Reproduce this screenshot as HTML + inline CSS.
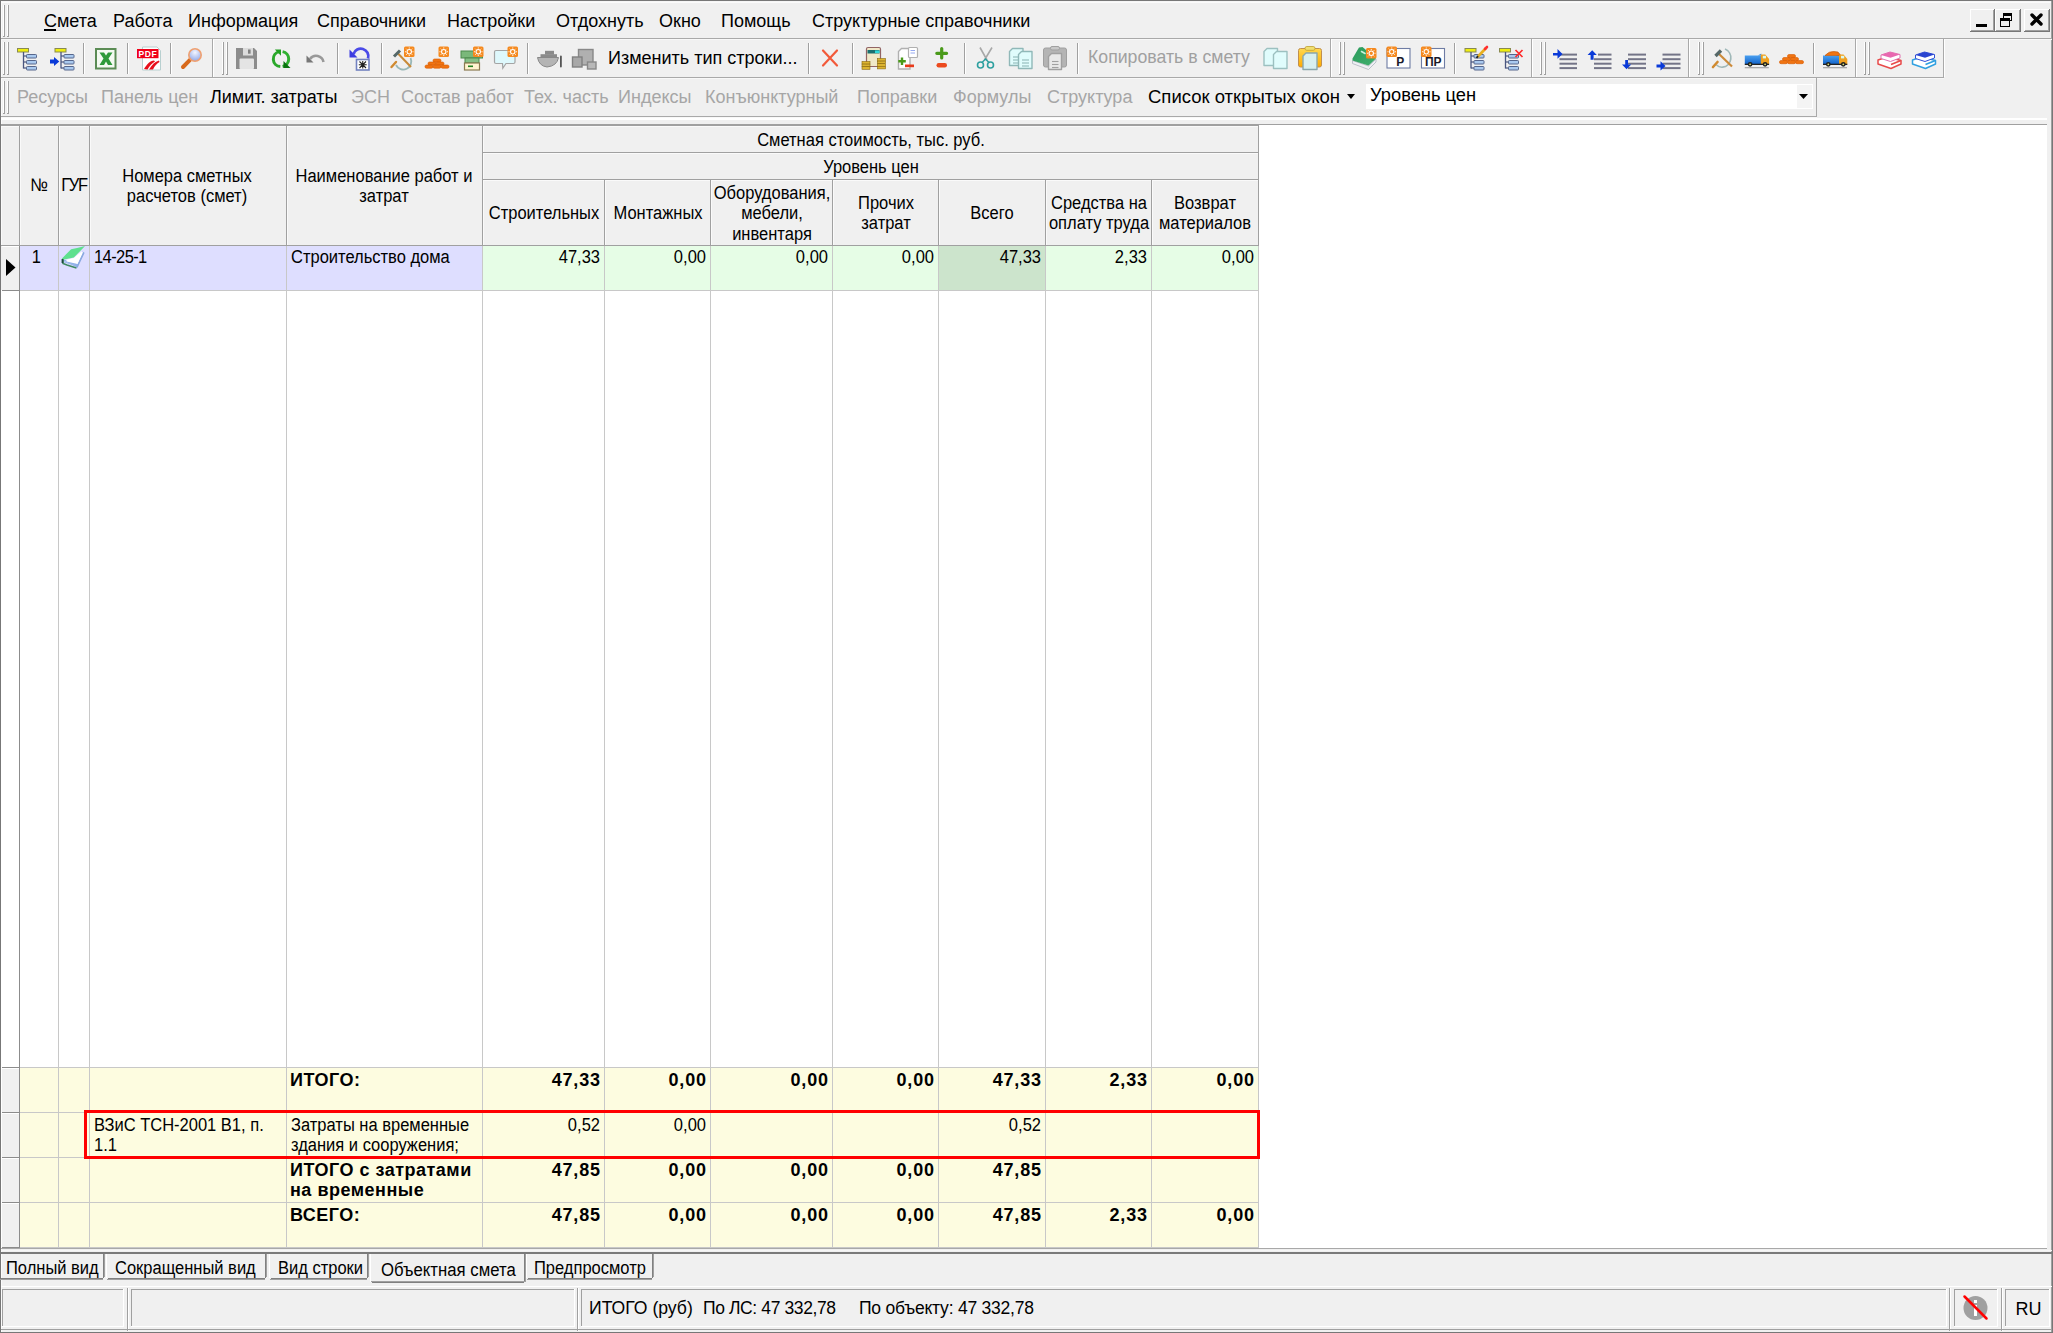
<!DOCTYPE html>
<html><head><meta charset="utf-8"><style>
html,body{margin:0;padding:0;}
body{width:2053px;height:1333px;overflow:hidden;position:relative;background:#f0f0f0;font-family:"Liberation Sans",sans-serif;}
body div{position:absolute;}
</style></head><body>
<div style="left:0px;top:0px;width:2053px;height:1333px;background:#f0f0f0;"></div>
<div style="left:0px;top:0px;width:2053px;height:1px;background:#777777;"></div>
<div style="left:0px;top:0px;width:1px;height:1333px;background:#777777;"></div>
<div style="left:2052px;top:0px;width:1px;height:1333px;background:#777777;"></div>
<div style="left:0px;top:1332px;width:2053px;height:1px;background:#777777;"></div>
<div style="left:1px;top:1px;width:2051px;height:1px;background:#f6f6f6;"></div>
<div style="left:1px;top:2px;width:2051px;height:1px;background:#fbfbfb;"></div>
<div style="left:1px;top:1px;width:1px;height:1331px;background:#fbfbfb;"></div>
<div style="left:2051px;top:1px;width:1px;height:1331px;background:#a0a0a0;"></div>
<div style="left:3px;top:5px;width:1px;height:32px;background:#ffffff;"></div>
<div style="left:4px;top:5px;width:1px;height:32px;background:#a0a0a0;"></div>
<div style="left:7px;top:5px;width:1px;height:32px;background:#ffffff;"></div>
<div style="left:8px;top:5px;width:1px;height:32px;background:#a0a0a0;"></div>
<div style="left:3px;top:36px;width:2px;height:1px;background:#a0a0a0;"></div>
<div style="left:7px;top:36px;width:2px;height:1px;background:#a0a0a0;"></div>
<div style="left:1px;top:38px;width:2051px;height:1px;background:#a9a9a9;"></div>
<div style="left:1px;top:39px;width:2051px;height:1px;background:#f8f8f8;"></div>
<div style="left:44px;top:11.85px;font-size:18px;line-height:18px;color:#000;white-space:nowrap;">Смета</div>
<div style="left:113px;top:11.85px;font-size:18px;line-height:18px;color:#000;white-space:nowrap;">Работа</div>
<div style="left:188px;top:11.85px;font-size:18px;line-height:18px;color:#000;white-space:nowrap;">Информация</div>
<div style="left:317px;top:11.85px;font-size:18px;line-height:18px;color:#000;white-space:nowrap;">Справочники</div>
<div style="left:447px;top:11.85px;font-size:18px;line-height:18px;color:#000;white-space:nowrap;">Настройки</div>
<div style="left:556px;top:11.85px;font-size:18px;line-height:18px;color:#000;white-space:nowrap;">Отдохнуть</div>
<div style="left:659px;top:11.85px;font-size:18px;line-height:18px;color:#000;white-space:nowrap;">Окно</div>
<div style="left:721px;top:11.85px;font-size:18px;line-height:18px;color:#000;white-space:nowrap;">Помощь</div>
<div style="left:812px;top:11.85px;font-size:18px;line-height:18px;color:#000;white-space:nowrap;">Структурные справочники</div>
<div style="left:44px;top:28.5px;width:12px;height:2px;background:#000;"></div>
<div style="left:1970px;top:9px;width:25px;height:23px;background:#f0f0f0;"></div>
<div style="left:1970px;top:9px;width:25px;height:1px;background:#ffffff;"></div>
<div style="left:1970px;top:9px;width:1px;height:23px;background:#ffffff;"></div>
<div style="left:1970px;top:31px;width:25px;height:1px;background:#777777;"></div>
<div style="left:1994px;top:9px;width:1px;height:23px;background:#777777;"></div>
<div style="left:1971px;top:30px;width:23px;height:1px;background:#a0a0a0;"></div>
<div style="left:1993px;top:10px;width:1px;height:21px;background:#a0a0a0;"></div>
<div style="left:1995px;top:9px;width:26px;height:23px;background:#f0f0f0;"></div>
<div style="left:1995px;top:9px;width:26px;height:1px;background:#ffffff;"></div>
<div style="left:1995px;top:9px;width:1px;height:23px;background:#ffffff;"></div>
<div style="left:1995px;top:31px;width:26px;height:1px;background:#777777;"></div>
<div style="left:2020px;top:9px;width:1px;height:23px;background:#777777;"></div>
<div style="left:1996px;top:30px;width:24px;height:1px;background:#a0a0a0;"></div>
<div style="left:2019px;top:10px;width:1px;height:21px;background:#a0a0a0;"></div>
<div style="left:2024px;top:9px;width:26px;height:23px;background:#f0f0f0;"></div>
<div style="left:2024px;top:9px;width:26px;height:1px;background:#ffffff;"></div>
<div style="left:2024px;top:9px;width:1px;height:23px;background:#ffffff;"></div>
<div style="left:2024px;top:31px;width:26px;height:1px;background:#777777;"></div>
<div style="left:2049px;top:9px;width:1px;height:23px;background:#777777;"></div>
<div style="left:2025px;top:30px;width:24px;height:1px;background:#a0a0a0;"></div>
<div style="left:2048px;top:10px;width:1px;height:21px;background:#a0a0a0;"></div>
<div style="left:1976px;top:24px;width:11px;height:3px;background:#000;"></div>
<div style="left:2003px;top:13px;width:9px;height:8px;border:1px solid #000;border-top-width:3px;box-sizing:border-box"></div>
<div style="left:2000px;top:18px;width:10px;height:9px;border:1px solid #000;border-top-width:3px;box-sizing:border-box;background:#f0f0f0"></div>
<svg style="position:absolute;left:2030px;top:13px" width="13" height="13" viewBox="0 0 13 13"><path d="M2 2L11 11M11 2L2 11" stroke="#000" stroke-width="3.4" stroke-linecap="round"/></svg>
<div style="left:1px;top:77px;width:1943px;height:1px;background:#a9a9a9;"></div>
<div style="left:1px;top:78px;width:1943px;height:1px;background:#f8f8f8;"></div>
<div style="left:212px;top:39px;width:1px;height:39px;background:#a9a9a9;"></div>
<div style="left:213px;top:39px;width:1px;height:38px;background:#ffffff;"></div>
<div style="left:1330px;top:39px;width:1px;height:39px;background:#a9a9a9;"></div>
<div style="left:1331px;top:39px;width:1px;height:38px;background:#ffffff;"></div>
<div style="left:1531px;top:39px;width:1px;height:39px;background:#a9a9a9;"></div>
<div style="left:1532px;top:39px;width:1px;height:38px;background:#ffffff;"></div>
<div style="left:1688px;top:39px;width:1px;height:39px;background:#a9a9a9;"></div>
<div style="left:1689px;top:39px;width:1px;height:38px;background:#ffffff;"></div>
<div style="left:1855px;top:39px;width:1px;height:39px;background:#a9a9a9;"></div>
<div style="left:1856px;top:39px;width:1px;height:38px;background:#ffffff;"></div>
<div style="left:1943px;top:39px;width:1px;height:39px;background:#a9a9a9;"></div>
<div style="left:1944px;top:39px;width:1px;height:38px;background:#ffffff;"></div>
<div style="left:3px;top:42px;width:1px;height:33px;background:#ffffff;"></div>
<div style="left:4px;top:42px;width:1px;height:33px;background:#a0a0a0;"></div>
<div style="left:7px;top:42px;width:1px;height:33px;background:#ffffff;"></div>
<div style="left:8px;top:42px;width:1px;height:33px;background:#a0a0a0;"></div>
<div style="left:3px;top:74px;width:2px;height:1px;background:#a0a0a0;"></div>
<div style="left:7px;top:74px;width:2px;height:1px;background:#a0a0a0;"></div>
<div style="left:222px;top:42px;width:1px;height:33px;background:#ffffff;"></div>
<div style="left:223px;top:42px;width:1px;height:33px;background:#a0a0a0;"></div>
<div style="left:226px;top:42px;width:1px;height:33px;background:#ffffff;"></div>
<div style="left:227px;top:42px;width:1px;height:33px;background:#a0a0a0;"></div>
<div style="left:222px;top:74px;width:2px;height:1px;background:#a0a0a0;"></div>
<div style="left:226px;top:74px;width:2px;height:1px;background:#a0a0a0;"></div>
<div style="left:1339px;top:42px;width:1px;height:33px;background:#ffffff;"></div>
<div style="left:1340px;top:42px;width:1px;height:33px;background:#a0a0a0;"></div>
<div style="left:1343px;top:42px;width:1px;height:33px;background:#ffffff;"></div>
<div style="left:1344px;top:42px;width:1px;height:33px;background:#a0a0a0;"></div>
<div style="left:1339px;top:74px;width:2px;height:1px;background:#a0a0a0;"></div>
<div style="left:1343px;top:74px;width:2px;height:1px;background:#a0a0a0;"></div>
<div style="left:1540px;top:42px;width:1px;height:33px;background:#ffffff;"></div>
<div style="left:1541px;top:42px;width:1px;height:33px;background:#a0a0a0;"></div>
<div style="left:1544px;top:42px;width:1px;height:33px;background:#ffffff;"></div>
<div style="left:1545px;top:42px;width:1px;height:33px;background:#a0a0a0;"></div>
<div style="left:1540px;top:74px;width:2px;height:1px;background:#a0a0a0;"></div>
<div style="left:1544px;top:74px;width:2px;height:1px;background:#a0a0a0;"></div>
<div style="left:1698px;top:42px;width:1px;height:33px;background:#ffffff;"></div>
<div style="left:1699px;top:42px;width:1px;height:33px;background:#a0a0a0;"></div>
<div style="left:1702px;top:42px;width:1px;height:33px;background:#ffffff;"></div>
<div style="left:1703px;top:42px;width:1px;height:33px;background:#a0a0a0;"></div>
<div style="left:1698px;top:74px;width:2px;height:1px;background:#a0a0a0;"></div>
<div style="left:1702px;top:74px;width:2px;height:1px;background:#a0a0a0;"></div>
<div style="left:1864px;top:42px;width:1px;height:33px;background:#ffffff;"></div>
<div style="left:1865px;top:42px;width:1px;height:33px;background:#a0a0a0;"></div>
<div style="left:1868px;top:42px;width:1px;height:33px;background:#ffffff;"></div>
<div style="left:1869px;top:42px;width:1px;height:33px;background:#a0a0a0;"></div>
<div style="left:1864px;top:74px;width:2px;height:1px;background:#a0a0a0;"></div>
<div style="left:1868px;top:74px;width:2px;height:1px;background:#a0a0a0;"></div>
<div style="left:83px;top:43px;width:1px;height:31px;background:#a0a0a0;"></div>
<div style="left:84px;top:43px;width:1px;height:31px;background:#ffffff;"></div>
<div style="left:127px;top:43px;width:1px;height:31px;background:#a0a0a0;"></div>
<div style="left:128px;top:43px;width:1px;height:31px;background:#ffffff;"></div>
<div style="left:170px;top:43px;width:1px;height:31px;background:#a0a0a0;"></div>
<div style="left:171px;top:43px;width:1px;height:31px;background:#ffffff;"></div>
<div style="left:337px;top:43px;width:1px;height:31px;background:#a0a0a0;"></div>
<div style="left:338px;top:43px;width:1px;height:31px;background:#ffffff;"></div>
<div style="left:381px;top:43px;width:1px;height:31px;background:#a0a0a0;"></div>
<div style="left:382px;top:43px;width:1px;height:31px;background:#ffffff;"></div>
<div style="left:527px;top:43px;width:1px;height:31px;background:#a0a0a0;"></div>
<div style="left:528px;top:43px;width:1px;height:31px;background:#ffffff;"></div>
<div style="left:808px;top:43px;width:1px;height:31px;background:#a0a0a0;"></div>
<div style="left:809px;top:43px;width:1px;height:31px;background:#ffffff;"></div>
<div style="left:852px;top:43px;width:1px;height:31px;background:#a0a0a0;"></div>
<div style="left:853px;top:43px;width:1px;height:31px;background:#ffffff;"></div>
<div style="left:964px;top:43px;width:1px;height:31px;background:#a0a0a0;"></div>
<div style="left:965px;top:43px;width:1px;height:31px;background:#ffffff;"></div>
<div style="left:1077px;top:43px;width:1px;height:31px;background:#a0a0a0;"></div>
<div style="left:1078px;top:43px;width:1px;height:31px;background:#ffffff;"></div>
<div style="left:1454px;top:43px;width:1px;height:31px;background:#a0a0a0;"></div>
<div style="left:1455px;top:43px;width:1px;height:31px;background:#ffffff;"></div>
<div style="left:1813px;top:43px;width:1px;height:31px;background:#a0a0a0;"></div>
<div style="left:1814px;top:43px;width:1px;height:31px;background:#ffffff;"></div>
<div style="left:608px;top:49.15px;font-size:18px;line-height:18px;color:#000;white-space:nowrap;">Изменить тип строки...</div>
<div style="left:1088px;top:49.19px;font-size:17.7px;line-height:17.7px;color:#a0a0a0;white-space:nowrap;">Копировать в смету</div>
<div style="left:1px;top:116px;width:1816px;height:1px;background:#a9a9a9;"></div>
<div style="left:1px;top:117px;width:1816px;height:1px;background:#f8f8f8;"></div>
<div style="left:3px;top:81px;width:1px;height:33px;background:#ffffff;"></div>
<div style="left:4px;top:81px;width:1px;height:33px;background:#a0a0a0;"></div>
<div style="left:7px;top:81px;width:1px;height:33px;background:#ffffff;"></div>
<div style="left:8px;top:81px;width:1px;height:33px;background:#a0a0a0;"></div>
<div style="left:3px;top:113px;width:2px;height:1px;background:#a0a0a0;"></div>
<div style="left:7px;top:113px;width:2px;height:1px;background:#a0a0a0;"></div>
<div style="left:1816px;top:78px;width:1px;height:39px;background:#a9a9a9;"></div>
<div style="left:17px;top:88.15px;font-size:18px;line-height:18px;color:#a6a6a6;white-space:nowrap;">Ресурсы</div>
<div style="left:101px;top:88.15px;font-size:18px;line-height:18px;color:#a6a6a6;white-space:nowrap;">Панель цен</div>
<div style="left:210px;top:88.15px;font-size:18px;line-height:18px;color:#000;white-space:nowrap;">Лимит. затраты</div>
<div style="left:351px;top:88.15px;font-size:18px;line-height:18px;color:#a6a6a6;white-space:nowrap;">ЭСН</div>
<div style="left:401px;top:88.15px;font-size:18px;line-height:18px;color:#a6a6a6;white-space:nowrap;">Состав работ</div>
<div style="left:524px;top:88.15px;font-size:18px;line-height:18px;color:#a6a6a6;white-space:nowrap;">Тех. часть</div>
<div style="left:618px;top:88.15px;font-size:18px;line-height:18px;color:#a6a6a6;white-space:nowrap;">Индексы</div>
<div style="left:705px;top:88.15px;font-size:18px;line-height:18px;color:#a6a6a6;white-space:nowrap;">Конъюнктурный</div>
<div style="left:857px;top:88.15px;font-size:18px;line-height:18px;color:#a6a6a6;white-space:nowrap;">Поправки</div>
<div style="left:953px;top:88.15px;font-size:18px;line-height:18px;color:#a6a6a6;white-space:nowrap;">Формулы</div>
<div style="left:1047px;top:88.15px;font-size:18px;line-height:18px;color:#a6a6a6;white-space:nowrap;">Структура</div>
<div style="left:1148px;top:88.09px;font-size:18.5px;line-height:18.5px;color:#000;white-space:nowrap;">Список открытых окон</div>
<svg style="position:absolute;left:1347px;top:94px" width="9" height="6" viewBox="0 0 9 6"><path d="M0 0H8L4 5Z" fill="#000"/></svg>
<div style="left:1366px;top:84px;width:447px;height:25px;background:#ffffff;"></div>
<div style="left:1370px;top:86.11px;font-size:18.3px;line-height:18.3px;color:#000;white-space:nowrap;">Уровень цен</div>
<div style="left:1797px;top:85px;width:15px;height:23px;background:#f4f4f4;"></div>
<svg style="position:absolute;left:1799px;top:94px" width="9" height="5" viewBox="0 0 9 5"><path d="M0 0H9L4.5 5Z" fill="#000"/></svg>
<div style="left:1px;top:118px;width:2046px;height:1px;background:#ffffff;"></div>
<div style="left:1px;top:119px;width:2046px;height:1px;background:#ffffff;"></div>
<div style="left:1px;top:124px;width:2046px;height:1px;background:#a0a0a0;"></div>
<div style="left:1px;top:125px;width:2046px;height:1124px;background:#ffffff;"></div>
<div style="left:1px;top:125px;width:1258px;height:120px;background:#f0f0f0;"></div>
<div style="left:1px;top:125px;width:1258px;height:1px;background:#a0a0a0;"></div>
<div style="left:1px;top:126px;width:1px;height:119px;background:#fafafa;"></div>
<div style="left:2px;top:126px;width:1256px;height:1px;background:#fafafa;"></div>
<div style="left:483px;top:153px;width:775px;height:1px;background:#fafafa;"></div>
<div style="left:483px;top:180px;width:775px;height:1px;background:#fafafa;"></div>
<div style="left:20px;top:126px;width:1px;height:119px;background:#fafafa;"></div>
<div style="left:59px;top:126px;width:1px;height:119px;background:#fafafa;"></div>
<div style="left:90px;top:126px;width:1px;height:119px;background:#fafafa;"></div>
<div style="left:287px;top:126px;width:1px;height:119px;background:#fafafa;"></div>
<div style="left:483px;top:126px;width:1px;height:119px;background:#fafafa;"></div>
<div style="left:605px;top:180px;width:1px;height:65px;background:#fafafa;"></div>
<div style="left:711px;top:180px;width:1px;height:65px;background:#fafafa;"></div>
<div style="left:833px;top:180px;width:1px;height:65px;background:#fafafa;"></div>
<div style="left:939px;top:180px;width:1px;height:65px;background:#fafafa;"></div>
<div style="left:1046px;top:180px;width:1px;height:65px;background:#fafafa;"></div>
<div style="left:1152px;top:180px;width:1px;height:65px;background:#fafafa;"></div>
<div style="left:19px;top:125px;width:1px;height:121px;background:#a0a0a0;"></div>
<div style="left:58px;top:125px;width:1px;height:121px;background:#a0a0a0;"></div>
<div style="left:89px;top:125px;width:1px;height:121px;background:#a0a0a0;"></div>
<div style="left:286px;top:125px;width:1px;height:121px;background:#a0a0a0;"></div>
<div style="left:482px;top:125px;width:1px;height:121px;background:#a0a0a0;"></div>
<div style="left:604px;top:179px;width:1px;height:67px;background:#a0a0a0;"></div>
<div style="left:710px;top:179px;width:1px;height:67px;background:#a0a0a0;"></div>
<div style="left:832px;top:179px;width:1px;height:67px;background:#a0a0a0;"></div>
<div style="left:938px;top:179px;width:1px;height:67px;background:#a0a0a0;"></div>
<div style="left:1045px;top:179px;width:1px;height:67px;background:#a0a0a0;"></div>
<div style="left:1151px;top:179px;width:1px;height:67px;background:#a0a0a0;"></div>
<div style="left:1258px;top:125px;width:1px;height:121px;background:#a0a0a0;"></div>
<div style="left:482px;top:152px;width:777px;height:1px;background:#a0a0a0;"></div>
<div style="left:482px;top:179px;width:777px;height:1px;background:#a0a0a0;"></div>
<div style="left:1px;top:245px;width:1258px;height:1px;background:#a0a0a0;"></div>
<div style="left:-111px;top:175.65px;font-size:18px;line-height:18px;color:#000;white-space:nowrap;width:300px;text-align:center;transform:scaleX(0.9167);transform-origin:center top;">№</div>
<div style="left:-76.5px;top:175.65px;font-size:18px;line-height:18px;color:#000;white-space:nowrap;letter-spacing:-1.4px;width:300px;text-align:center;transform:scaleX(0.9167);transform-origin:center top;">ГУF</div>
<div style="left:37px;top:167.15px;font-size:18px;line-height:18px;color:#000;white-space:nowrap;width:300px;text-align:center;transform:scaleX(0.9167);transform-origin:center top;">Номера сметных</div>
<div style="left:37px;top:186.65px;font-size:18px;line-height:18px;color:#000;white-space:nowrap;width:300px;text-align:center;transform:scaleX(0.9167);transform-origin:center top;">расчетов (смет)</div>
<div style="left:234px;top:167.15px;font-size:18px;line-height:18px;color:#000;white-space:nowrap;width:300px;text-align:center;transform:scaleX(0.9167);transform-origin:center top;">Наименование работ и</div>
<div style="left:234px;top:186.65px;font-size:18px;line-height:18px;color:#000;white-space:nowrap;width:300px;text-align:center;transform:scaleX(0.9167);transform-origin:center top;">затрат</div>
<div style="left:720.5px;top:131.15px;font-size:18px;line-height:18px;color:#000;white-space:nowrap;width:300px;text-align:center;transform:scaleX(0.9167);transform-origin:center top;">Сметная стоимость, тыс. руб.</div>
<div style="left:720.5px;top:158.15px;font-size:18px;line-height:18px;color:#000;white-space:nowrap;width:300px;text-align:center;transform:scaleX(0.9167);transform-origin:center top;">Уровень цен</div>
<div style="left:393.5px;top:204.15px;font-size:18px;line-height:18px;color:#000;white-space:nowrap;width:300px;text-align:center;transform:scaleX(0.9167);transform-origin:center top;">Строительных</div>
<div style="left:507.5px;top:204.15px;font-size:18px;line-height:18px;color:#000;white-space:nowrap;width:300px;text-align:center;transform:scaleX(0.9167);transform-origin:center top;">Монтажных</div>
<div style="left:621.5px;top:184.15px;font-size:18px;line-height:18px;color:#000;white-space:nowrap;width:300px;text-align:center;transform:scaleX(0.9167);transform-origin:center top;">Оборудования,</div>
<div style="left:621.5px;top:204.15px;font-size:18px;line-height:18px;color:#000;white-space:nowrap;width:300px;text-align:center;transform:scaleX(0.9167);transform-origin:center top;">мебели,</div>
<div style="left:621.5px;top:224.65px;font-size:18px;line-height:18px;color:#000;white-space:nowrap;width:300px;text-align:center;transform:scaleX(0.9167);transform-origin:center top;">инвентаря</div>
<div style="left:735.5px;top:193.65px;font-size:18px;line-height:18px;color:#000;white-space:nowrap;width:300px;text-align:center;transform:scaleX(0.9167);transform-origin:center top;">Прочих</div>
<div style="left:735.5px;top:213.65px;font-size:18px;line-height:18px;color:#000;white-space:nowrap;width:300px;text-align:center;transform:scaleX(0.9167);transform-origin:center top;">затрат</div>
<div style="left:842px;top:204.15px;font-size:18px;line-height:18px;color:#000;white-space:nowrap;width:300px;text-align:center;transform:scaleX(0.9167);transform-origin:center top;">Всего</div>
<div style="left:948.5px;top:193.65px;font-size:18px;line-height:18px;color:#000;white-space:nowrap;width:300px;text-align:center;transform:scaleX(0.9167);transform-origin:center top;">Средства на</div>
<div style="left:948.5px;top:213.65px;font-size:18px;line-height:18px;color:#000;white-space:nowrap;width:300px;text-align:center;transform:scaleX(0.9167);transform-origin:center top;">оплату труда</div>
<div style="left:1055px;top:193.65px;font-size:18px;line-height:18px;color:#000;white-space:nowrap;width:300px;text-align:center;transform:scaleX(0.9167);transform-origin:center top;">Возврат</div>
<div style="left:1055px;top:213.65px;font-size:18px;line-height:18px;color:#000;white-space:nowrap;width:300px;text-align:center;transform:scaleX(0.9167);transform-origin:center top;">материалов</div>
<div style="left:20px;top:246px;width:462px;height:44px;background:#dedeff;"></div>
<div style="left:483px;top:246px;width:775px;height:44px;background:#e6fde6;"></div>
<div style="left:939px;top:246px;width:106px;height:44px;background:#cce4cc;"></div>
<div style="left:58px;top:246px;width:1px;height:1002px;background:#c8c8c8;"></div>
<div style="left:89px;top:246px;width:1px;height:1002px;background:#c8c8c8;"></div>
<div style="left:286px;top:246px;width:1px;height:1002px;background:#c8c8c8;"></div>
<div style="left:482px;top:246px;width:1px;height:1002px;background:#c8c8c8;"></div>
<div style="left:604px;top:246px;width:1px;height:1002px;background:#c8c8c8;"></div>
<div style="left:710px;top:246px;width:1px;height:1002px;background:#c8c8c8;"></div>
<div style="left:832px;top:246px;width:1px;height:1002px;background:#c8c8c8;"></div>
<div style="left:938px;top:246px;width:1px;height:1002px;background:#c8c8c8;"></div>
<div style="left:1045px;top:246px;width:1px;height:1002px;background:#c8c8c8;"></div>
<div style="left:1151px;top:246px;width:1px;height:1002px;background:#c8c8c8;"></div>
<div style="left:1258px;top:246px;width:1px;height:1002px;background:#c8c8c8;"></div>
<div style="left:19px;top:246px;width:1px;height:1002px;background:#8c8c8c;"></div>
<div style="left:20px;top:290px;width:1239px;height:1px;background:#c8c8c8;"></div>
<div style="left:2px;top:290px;width:18px;height:1px;background:#8c8c8c;"></div>
<div style="left:20px;top:1068px;width:1238px;height:179px;background:#fdfce0;"></div>
<div style="left:58px;top:1068px;width:1px;height:180px;background:#c8c8c8;"></div>
<div style="left:89px;top:1068px;width:1px;height:180px;background:#c8c8c8;"></div>
<div style="left:286px;top:1068px;width:1px;height:180px;background:#c8c8c8;"></div>
<div style="left:482px;top:1068px;width:1px;height:180px;background:#c8c8c8;"></div>
<div style="left:604px;top:1068px;width:1px;height:180px;background:#c8c8c8;"></div>
<div style="left:710px;top:1068px;width:1px;height:180px;background:#c8c8c8;"></div>
<div style="left:832px;top:1068px;width:1px;height:180px;background:#c8c8c8;"></div>
<div style="left:938px;top:1068px;width:1px;height:180px;background:#c8c8c8;"></div>
<div style="left:1045px;top:1068px;width:1px;height:180px;background:#c8c8c8;"></div>
<div style="left:1151px;top:1068px;width:1px;height:180px;background:#c8c8c8;"></div>
<div style="left:1258px;top:1068px;width:1px;height:180px;background:#c8c8c8;"></div>
<div style="left:20px;top:1067px;width:1239px;height:1px;background:#c8c8c8;"></div>
<div style="left:2px;top:1067px;width:18px;height:1px;background:#8c8c8c;"></div>
<div style="left:20px;top:1112px;width:1239px;height:1px;background:#c8c8c8;"></div>
<div style="left:2px;top:1112px;width:18px;height:1px;background:#8c8c8c;"></div>
<div style="left:20px;top:1157px;width:1239px;height:1px;background:#c8c8c8;"></div>
<div style="left:2px;top:1157px;width:18px;height:1px;background:#8c8c8c;"></div>
<div style="left:20px;top:1202px;width:1239px;height:1px;background:#c8c8c8;"></div>
<div style="left:2px;top:1202px;width:18px;height:1px;background:#8c8c8c;"></div>
<div style="left:20px;top:1247px;width:1239px;height:1px;background:#c8c8c8;"></div>
<div style="left:2px;top:1247px;width:18px;height:1px;background:#8c8c8c;"></div>
<div style="left:2px;top:1068px;width:17px;height:44px;background:#f0f0f0;"></div>
<div style="left:2px;top:1068px;width:17px;height:1px;background:#ffffff;"></div>
<div style="left:2px;top:1113px;width:17px;height:44px;background:#f0f0f0;"></div>
<div style="left:2px;top:1113px;width:17px;height:1px;background:#ffffff;"></div>
<div style="left:2px;top:1158px;width:17px;height:44px;background:#f0f0f0;"></div>
<div style="left:2px;top:1158px;width:17px;height:1px;background:#ffffff;"></div>
<div style="left:2px;top:1203px;width:17px;height:44px;background:#f0f0f0;"></div>
<div style="left:2px;top:1203px;width:17px;height:1px;background:#ffffff;"></div>
<div style="left:1px;top:246px;width:18px;height:44px;background:#f0f0f0;"></div>
<div style="left:2px;top:246px;width:17px;height:1px;background:#ffffff;"></div>
<svg style="position:absolute;left:6px;top:259px" width="10" height="18" viewBox="0 0 10 18"><path d="M0 0L9.5 8.5L0 17Z" fill="#000"/></svg>
<div style="left:-259.5px;top:248.15px;font-size:18px;line-height:18px;color:#000;white-space:nowrap;width:300px;text-align:right;transform:scaleX(0.9167);transform-origin:right top;">1</div>
<div style="left:94px;top:248.15px;font-size:18px;line-height:18px;color:#000;white-space:nowrap;letter-spacing:-0.65px;transform:scaleX(0.9167);transform-origin:left top;">14-25-1</div>
<div style="left:291px;top:248.15px;font-size:18px;line-height:18px;color:#000;white-space:nowrap;transform:scaleX(0.9167);transform-origin:left top;">Строительство дома</div>
<div style="left:300px;top:248.15px;font-size:18px;line-height:18px;color:#000;white-space:nowrap;width:300px;text-align:right;transform:scaleX(0.9167);transform-origin:right top;">47,33</div>
<div style="left:406px;top:248.15px;font-size:18px;line-height:18px;color:#000;white-space:nowrap;width:300px;text-align:right;transform:scaleX(0.9167);transform-origin:right top;">0,00</div>
<div style="left:528px;top:248.15px;font-size:18px;line-height:18px;color:#000;white-space:nowrap;width:300px;text-align:right;transform:scaleX(0.9167);transform-origin:right top;">0,00</div>
<div style="left:634px;top:248.15px;font-size:18px;line-height:18px;color:#000;white-space:nowrap;width:300px;text-align:right;transform:scaleX(0.9167);transform-origin:right top;">0,00</div>
<div style="left:741px;top:248.15px;font-size:18px;line-height:18px;color:#000;white-space:nowrap;width:300px;text-align:right;transform:scaleX(0.9167);transform-origin:right top;">47,33</div>
<div style="left:847px;top:248.15px;font-size:18px;line-height:18px;color:#000;white-space:nowrap;width:300px;text-align:right;transform:scaleX(0.9167);transform-origin:right top;">2,33</div>
<div style="left:954px;top:248.15px;font-size:18px;line-height:18px;color:#000;white-space:nowrap;width:300px;text-align:right;transform:scaleX(0.9167);transform-origin:right top;">0,00</div>
<div style="left:290px;top:1071.15px;font-size:18px;line-height:18px;color:#000;white-space:nowrap;font-weight:bold;letter-spacing:0.5px;">ИТОГО:</div>
<div style="left:300.79999999999995px;top:1071.15px;font-size:18px;line-height:18px;color:#000;white-space:nowrap;font-weight:bold;letter-spacing:0.8px;width:300px;text-align:right;">47,33</div>
<div style="left:406.79999999999995px;top:1071.15px;font-size:18px;line-height:18px;color:#000;white-space:nowrap;font-weight:bold;letter-spacing:0.8px;width:300px;text-align:right;">0,00</div>
<div style="left:528.8px;top:1071.15px;font-size:18px;line-height:18px;color:#000;white-space:nowrap;font-weight:bold;letter-spacing:0.8px;width:300px;text-align:right;">0,00</div>
<div style="left:634.8px;top:1071.15px;font-size:18px;line-height:18px;color:#000;white-space:nowrap;font-weight:bold;letter-spacing:0.8px;width:300px;text-align:right;">0,00</div>
<div style="left:741.8px;top:1071.15px;font-size:18px;line-height:18px;color:#000;white-space:nowrap;font-weight:bold;letter-spacing:0.8px;width:300px;text-align:right;">47,33</div>
<div style="left:847.8px;top:1071.15px;font-size:18px;line-height:18px;color:#000;white-space:nowrap;font-weight:bold;letter-spacing:0.8px;width:300px;text-align:right;">2,33</div>
<div style="left:954.8px;top:1071.15px;font-size:18px;line-height:18px;color:#000;white-space:nowrap;font-weight:bold;letter-spacing:0.8px;width:300px;text-align:right;">0,00</div>
<div style="left:94px;top:1115.65px;font-size:18px;line-height:18px;color:#000;white-space:nowrap;transform:scaleX(0.9167);transform-origin:left top;">ВЗиС ТСН-2001 В1, п.</div>
<div style="left:94px;top:1135.65px;font-size:18px;line-height:18px;color:#000;white-space:nowrap;transform:scaleX(0.9167);transform-origin:left top;">1.1</div>
<div style="left:291px;top:1115.65px;font-size:18px;line-height:18px;color:#000;white-space:nowrap;transform:scaleX(0.9167);transform-origin:left top;">Затраты на временные</div>
<div style="left:291px;top:1135.65px;font-size:18px;line-height:18px;color:#000;white-space:nowrap;transform:scaleX(0.9167);transform-origin:left top;">здания и сооружения;</div>
<div style="left:300px;top:1115.65px;font-size:18px;line-height:18px;color:#000;white-space:nowrap;width:300px;text-align:right;transform:scaleX(0.9167);transform-origin:right top;">0,52</div>
<div style="left:406px;top:1115.65px;font-size:18px;line-height:18px;color:#000;white-space:nowrap;width:300px;text-align:right;transform:scaleX(0.9167);transform-origin:right top;">0,00</div>
<div style="left:741px;top:1115.65px;font-size:18px;line-height:18px;color:#000;white-space:nowrap;width:300px;text-align:right;transform:scaleX(0.9167);transform-origin:right top;">0,52</div>
<div style="left:290px;top:1161.15px;font-size:18px;line-height:18px;color:#000;white-space:nowrap;font-weight:bold;letter-spacing:0.5px;">ИТОГО с затратами</div>
<div style="left:290px;top:1181.15px;font-size:18px;line-height:18px;color:#000;white-space:nowrap;font-weight:bold;letter-spacing:0.5px;">на временные</div>
<div style="left:300.79999999999995px;top:1161.15px;font-size:18px;line-height:18px;color:#000;white-space:nowrap;font-weight:bold;letter-spacing:0.8px;width:300px;text-align:right;">47,85</div>
<div style="left:406.79999999999995px;top:1161.15px;font-size:18px;line-height:18px;color:#000;white-space:nowrap;font-weight:bold;letter-spacing:0.8px;width:300px;text-align:right;">0,00</div>
<div style="left:528.8px;top:1161.15px;font-size:18px;line-height:18px;color:#000;white-space:nowrap;font-weight:bold;letter-spacing:0.8px;width:300px;text-align:right;">0,00</div>
<div style="left:634.8px;top:1161.15px;font-size:18px;line-height:18px;color:#000;white-space:nowrap;font-weight:bold;letter-spacing:0.8px;width:300px;text-align:right;">0,00</div>
<div style="left:741.8px;top:1161.15px;font-size:18px;line-height:18px;color:#000;white-space:nowrap;font-weight:bold;letter-spacing:0.8px;width:300px;text-align:right;">47,85</div>
<div style="left:290px;top:1206.15px;font-size:18px;line-height:18px;color:#000;white-space:nowrap;font-weight:bold;letter-spacing:0.5px;">ВСЕГО:</div>
<div style="left:300.79999999999995px;top:1206.15px;font-size:18px;line-height:18px;color:#000;white-space:nowrap;font-weight:bold;letter-spacing:0.8px;width:300px;text-align:right;">47,85</div>
<div style="left:406.79999999999995px;top:1206.15px;font-size:18px;line-height:18px;color:#000;white-space:nowrap;font-weight:bold;letter-spacing:0.8px;width:300px;text-align:right;">0,00</div>
<div style="left:528.8px;top:1206.15px;font-size:18px;line-height:18px;color:#000;white-space:nowrap;font-weight:bold;letter-spacing:0.8px;width:300px;text-align:right;">0,00</div>
<div style="left:634.8px;top:1206.15px;font-size:18px;line-height:18px;color:#000;white-space:nowrap;font-weight:bold;letter-spacing:0.8px;width:300px;text-align:right;">0,00</div>
<div style="left:741.8px;top:1206.15px;font-size:18px;line-height:18px;color:#000;white-space:nowrap;font-weight:bold;letter-spacing:0.8px;width:300px;text-align:right;">47,85</div>
<div style="left:847.8px;top:1206.15px;font-size:18px;line-height:18px;color:#000;white-space:nowrap;font-weight:bold;letter-spacing:0.8px;width:300px;text-align:right;">2,33</div>
<div style="left:954.8px;top:1206.15px;font-size:18px;line-height:18px;color:#000;white-space:nowrap;font-weight:bold;letter-spacing:0.8px;width:300px;text-align:right;">0,00</div>
<div style="left:84px;top:1110px;width:1176px;height:49px;border:3px solid #ff0000;box-sizing:border-box"></div>
<div style="left:1px;top:1248px;width:2046px;height:1px;background:#a8a8a8;"></div>
<div style="left:1px;top:1250px;width:2051px;height:1px;background:#f6f6f6;"></div>
<div style="left:1px;top:1252px;width:2051px;height:1px;background:#7a7a7a;"></div>
<div style="left:1px;top:1253px;width:2051px;height:1px;background:#7a7a7a;"></div>
<div style="left:-1px;top:1254px;width:1px;height:24px;background:#ffffff;"></div>
<div style="left:103px;top:1254px;width:1px;height:24px;background:#808080;"></div>
<div style="left:104px;top:1254px;width:1px;height:23px;background:#a0a0a0;"></div>
<div style="left:1px;top:1278px;width:102px;height:1px;background:#808080;"></div>
<div style="left:0px;top:1279px;width:103px;height:1px;background:#a0a0a0;"></div>
<div style="left:6px;top:1258.65px;font-size:18px;line-height:18px;color:#000;white-space:nowrap;transform:scaleX(0.9167);transform-origin:left top;">Полный вид</div>
<div style="left:106px;top:1254px;width:1px;height:24px;background:#ffffff;"></div>
<div style="left:265px;top:1254px;width:1px;height:24px;background:#808080;"></div>
<div style="left:266px;top:1254px;width:1px;height:23px;background:#a0a0a0;"></div>
<div style="left:108px;top:1278px;width:157px;height:1px;background:#808080;"></div>
<div style="left:107px;top:1279px;width:158px;height:1px;background:#a0a0a0;"></div>
<div style="left:115px;top:1258.65px;font-size:18px;line-height:18px;color:#000;white-space:nowrap;transform:scaleX(0.9167);transform-origin:left top;">Сокращенный вид</div>
<div style="left:269px;top:1254px;width:1px;height:24px;background:#ffffff;"></div>
<div style="left:367px;top:1254px;width:1px;height:24px;background:#808080;"></div>
<div style="left:368px;top:1254px;width:1px;height:23px;background:#a0a0a0;"></div>
<div style="left:271px;top:1278px;width:96px;height:1px;background:#808080;"></div>
<div style="left:270px;top:1279px;width:97px;height:1px;background:#a0a0a0;"></div>
<div style="left:277.5px;top:1258.65px;font-size:18px;line-height:18px;color:#000;white-space:nowrap;transform:scaleX(0.9167);transform-origin:left top;">Вид строки</div>
<div style="left:526px;top:1254px;width:1px;height:24px;background:#ffffff;"></div>
<div style="left:652px;top:1254px;width:1px;height:24px;background:#808080;"></div>
<div style="left:653px;top:1254px;width:1px;height:23px;background:#a0a0a0;"></div>
<div style="left:528px;top:1278px;width:124px;height:1px;background:#808080;"></div>
<div style="left:527px;top:1279px;width:125px;height:1px;background:#a0a0a0;"></div>
<div style="left:534px;top:1258.65px;font-size:18px;line-height:18px;color:#000;white-space:nowrap;transform:scaleX(0.9167);transform-origin:left top;">Предпросмотр</div>
<div style="left:370px;top:1254px;width:156px;height:29px;background:#f0f0f0;"></div>
<div style="left:370px;top:1254px;width:1px;height:28px;background:#ffffff;"></div>
<div style="left:525px;top:1254px;width:1px;height:28px;background:#a0a0a0;"></div>
<div style="left:524px;top:1254px;width:1px;height:28px;background:#808080;"></div>
<div style="left:372px;top:1282px;width:152px;height:1px;background:#808080;"></div>
<div style="left:371px;top:1281px;width:154px;height:1px;background:#a0a0a0;"></div>
<div style="left:380.5px;top:1261.15px;font-size:18px;line-height:18px;color:#000;white-space:nowrap;transform:scaleX(0.93);transform-origin:left top;">Объектная смета</div>
<div style="left:1px;top:1286px;width:2051px;height:1px;background:#ffffff;"></div>
<div style="left:2px;top:1289px;width:122px;height:1px;background:#a0a0a0;"></div>
<div style="left:2px;top:1289px;width:1px;height:37px;background:#a0a0a0;"></div>
<div style="left:2px;top:1326px;width:122px;height:1px;background:#ffffff;"></div>
<div style="left:123px;top:1289px;width:1px;height:38px;background:#ffffff;"></div>
<div style="left:131px;top:1289px;width:444px;height:1px;background:#a0a0a0;"></div>
<div style="left:131px;top:1289px;width:1px;height:37px;background:#a0a0a0;"></div>
<div style="left:131px;top:1326px;width:444px;height:1px;background:#ffffff;"></div>
<div style="left:574px;top:1289px;width:1px;height:38px;background:#ffffff;"></div>
<div style="left:581px;top:1289px;width:1366px;height:1px;background:#a0a0a0;"></div>
<div style="left:581px;top:1289px;width:1px;height:37px;background:#a0a0a0;"></div>
<div style="left:581px;top:1326px;width:1366px;height:1px;background:#ffffff;"></div>
<div style="left:1946px;top:1289px;width:1px;height:38px;background:#ffffff;"></div>
<div style="left:1954px;top:1289px;width:44px;height:1px;background:#a0a0a0;"></div>
<div style="left:1954px;top:1289px;width:1px;height:37px;background:#a0a0a0;"></div>
<div style="left:1954px;top:1326px;width:44px;height:1px;background:#ffffff;"></div>
<div style="left:1997px;top:1289px;width:1px;height:38px;background:#ffffff;"></div>
<div style="left:2005px;top:1289px;width:45px;height:1px;background:#a0a0a0;"></div>
<div style="left:2005px;top:1289px;width:1px;height:37px;background:#a0a0a0;"></div>
<div style="left:2005px;top:1326px;width:45px;height:1px;background:#ffffff;"></div>
<div style="left:2049px;top:1289px;width:1px;height:38px;background:#ffffff;"></div>
<div style="left:127px;top:1288px;width:1px;height:43px;background:#a0a0a0;"></div>
<div style="left:128px;top:1288px;width:1px;height:43px;background:#ffffff;"></div>
<div style="left:577px;top:1288px;width:1px;height:43px;background:#a0a0a0;"></div>
<div style="left:578px;top:1288px;width:1px;height:43px;background:#ffffff;"></div>
<div style="left:1949px;top:1288px;width:1px;height:43px;background:#a0a0a0;"></div>
<div style="left:1950px;top:1288px;width:1px;height:43px;background:#ffffff;"></div>
<div style="left:2001px;top:1288px;width:1px;height:43px;background:#a0a0a0;"></div>
<div style="left:2002px;top:1288px;width:1px;height:43px;background:#ffffff;"></div>
<div style="left:1px;top:1329px;width:2051px;height:1px;background:#a0a0a0;"></div>
<div style="left:589px;top:1299.7px;font-size:17.6px;line-height:17.6px;color:#000;white-space:nowrap;">ИТОГО (руб)</div>
<div style="left:703px;top:1299.72px;font-size:17.5px;line-height:17.5px;color:#000;white-space:nowrap;letter-spacing:-0.39px;">По ЛС: 47 332,78</div>
<div style="left:859px;top:1299.72px;font-size:17.5px;line-height:17.5px;color:#000;white-space:nowrap;letter-spacing:-0.22px;">По объекту: 47 332,78</div>
<div style="left:2015.5px;top:1299.65px;font-size:18px;line-height:18px;color:#000;white-space:nowrap;">RU</div>
<svg style="position:absolute;left:1962px;top:1294px" width="28" height="28" viewBox="0 0 28 28"><circle cx="13.5" cy="14" r="12" fill="#a0a0a0"/><rect x="12" y="6" width="3" height="3" fill="#fff"/><rect x="12" y="11" width="3" height="11" fill="#fff"/><path d="M2.5 2.5L24.5 24.5" stroke="#ff0000" stroke-width="2.5" stroke-linecap="round"/></svg>
<svg style="position:absolute;left:0;top:0" width="2053" height="80" viewBox="0 0 2053 80"><rect x="17.5" y="48.5" width="11" height="3.5" fill="#eeee10" stroke="#8a8a50" stroke-width="1"/><path d="M23.5 52V68.5" stroke="#4a5680" stroke-width="1.3"/><path d="M23.5 56H26.5" stroke="#4a5680" stroke-width="1.2"/><rect x="26.5" y="54.5" width="10" height="3.5" rx="0.8" fill="#a9c9ef" stroke="#56668c" stroke-width="1"/><path d="M23.5 62H26.5" stroke="#4a5680" stroke-width="1.2"/><rect x="26.5" y="60.5" width="10" height="3.5" rx="0.8" fill="#a9c9ef" stroke="#56668c" stroke-width="1"/><path d="M23.5 68H26.5" stroke="#4a5680" stroke-width="1.2"/><rect x="26.5" y="66.5" width="10" height="3.5" rx="0.8" fill="#a9c9ef" stroke="#56668c" stroke-width="1"/><rect x="55.0" y="48.5" width="11" height="3.5" fill="#eeee10" stroke="#8a8a50" stroke-width="1"/><path d="M61.0 52V68.5" stroke="#4a5680" stroke-width="1.3"/><path d="M61.0 56H64.0" stroke="#4a5680" stroke-width="1.2"/><rect x="64.0" y="54.5" width="10" height="3.5" rx="0.8" fill="#a9c9ef" stroke="#56668c" stroke-width="1"/><path d="M61.0 62H64.0" stroke="#4a5680" stroke-width="1.2"/><rect x="64.0" y="60.5" width="10" height="3.5" rx="0.8" fill="#a9c9ef" stroke="#56668c" stroke-width="1"/><path d="M61.0 68H64.0" stroke="#4a5680" stroke-width="1.2"/><rect x="64.0" y="66.5" width="10" height="3.5" rx="0.8" fill="#a9c9ef" stroke="#56668c" stroke-width="1"/><path d="M50 59.5H54V57L59.3 61.5L54 66V63.5H50Z" fill="#0a3ad8"/><rect x="96" y="49" width="19.5" height="19.5" fill="#f4faf2" stroke="#5b8c55" stroke-width="2"/><path d="M99.5 52.5H104L106 55.5L108 52.5H112.5L108.5 58.5L112.5 65H108L106 61.5L104 65H99.5L103.5 58.5Z" fill="#2e9a3a"/><path d="M142.5 47H157L160.5 50.5V70H142.5Z" fill="#ffffff" stroke="#b8d0d0" stroke-width="1"/><rect x="137" y="49" width="21.5" height="9.2" fill="#f00018"/><text x="147.8" y="56.8" font-family="Liberation Sans" font-weight="bold" font-size="8.5" fill="#fff" text-anchor="middle" letter-spacing="0.6">PDF</text><path d="M144 69C147 64 150 61 154 60.5L155 61.5C152 63 149.5 66 147.5 69.5Z M149 69.5C152 64.5 155 61.5 159 60.5L159.5 62C157 63.5 154.5 66 153 69.5Z" fill="#e8101c"/><path d="M183 67L190 59.8" stroke="#d86a1c" stroke-width="4" stroke-linecap="round"/><defs><radialGradient id="lens" cx="0.5" cy="0.3" r="0.7"><stop offset="0" stop-color="#f4f6ff"/><stop offset="1" stop-color="#90a8e8"/></radialGradient><linearGradient id="yel" x1="0" y1="0" x2="0" y2="1"><stop offset="0" stop-color="#ffd850"/><stop offset="1" stop-color="#ffab00"/></linearGradient><linearGradient id="grn" x1="0" y1="0" x2="0" y2="1"><stop offset="0" stop-color="#3cba3c"/><stop offset="1" stop-color="#0a7a10"/></linearGradient><linearGradient id="blu" x1="0" y1="0" x2="0" y2="1"><stop offset="0" stop-color="#4aa0f0"/><stop offset="1" stop-color="#1060c8"/></linearGradient></defs><circle cx="195" cy="55" r="6.2" fill="url(#lens)" stroke="#f0a070" stroke-width="1.6"/><path d="M236 48H254L257 51V69H236Z" fill="#8c8c8c"/><rect x="243" y="48" width="10" height="7.5" fill="#dcdcdc"/><rect x="248" y="49.5" width="2.6" height="4.2" fill="#808080"/><rect x="239.5" y="58.5" width="14.5" height="10.5" rx="1" fill="#e4e4e4"/><path d="M279.3 51.6A7.6 7.6 0 0 0 280.3 66.6" fill="none" stroke="#2aa82a" stroke-width="3"/><path d="M274.8 49.5H281V55.7Z" fill="#22a022"/><path d="M282.6 66.5A7.6 7.6 0 0 0 282.6 51.6" fill="none" stroke="#30b030" stroke-width="3"/><path d="M283.5 61V68H290.5Z" fill="#0a7410"/><path d="M310 59A7.5 7.5 0 0 1 323.5 62" fill="none" stroke="#999" stroke-width="2.6"/><path d="M306.5 55.5V62.5H313.5Z" fill="#777"/><path d="M353.5 54A7.5 7.5 0 0 1 368 58.5" fill="none" stroke="#4a4ae8" stroke-width="2.8"/><path d="M349.5 49.5V57.5H357.5Z" fill="#3c3ce0"/><rect x="356.5" y="59.5" width="12.5" height="10.5" fill="#fff" stroke="#7282c0" stroke-width="1.6"/><path d="M359.5 61.5L366 68M366 61.5L359.5 68M362.75 61V68.5M358.8 64.75H366.7" stroke="#222" stroke-width="1.1"/><path d="M396 65A7 7 0 0 0 410.5 58" fill="none" stroke="#9ab8b8" stroke-width="1.8"/><path d="M391.5 67L396 62" stroke="#d08a30" stroke-width="2.4" stroke-linecap="round"/><path d="M398 53.5L411 67" stroke="#c88a38" stroke-width="2" /><path d="M394 56.5L400 50.5" stroke="#556868" stroke-width="3"/><rect x="404" y="46.5" width="10.5" height="10.5" rx="1.5" fill="#f5891e"/><circle cx="409.25" cy="51.75" r="2.2" fill="none" stroke="#fff" stroke-width="1.1"/><line x1="409.25" y1="48.55" x2="409.25" y2="47.45" stroke="#fff" stroke-width="0.9"/><line x1="409.25" y1="54.95" x2="409.25" y2="56.05" stroke="#fff" stroke-width="0.9"/><line x1="412.45" y1="51.75" x2="413.55" y2="51.75" stroke="#fff" stroke-width="0.9"/><line x1="406.05" y1="51.75" x2="404.95" y2="51.75" stroke="#fff" stroke-width="0.9"/><line x1="411.49" y1="53.99" x2="412.26" y2="54.76" stroke="#fff" stroke-width="0.9"/><line x1="407.01" y1="53.99" x2="406.24" y2="54.76" stroke="#fff" stroke-width="0.9"/><line x1="411.49" y1="49.51" x2="412.26" y2="48.74" stroke="#fff" stroke-width="0.9"/><line x1="407.01" y1="49.51" x2="406.24" y2="48.74" stroke="#fff" stroke-width="0.9"/><rect x="433.0" y="59.0" width="8.0" height="3.2" rx="1.5" fill="#f07412" stroke="#d85a00" stroke-width="0.6"/><rect x="428.0" y="62.0" width="8.0" height="3.2" rx="1.5" fill="#f07412" stroke="#d85a00" stroke-width="0.6"/><rect x="436.0" y="62.0" width="8.0" height="3.2" rx="1.5" fill="#f07412" stroke="#d85a00" stroke-width="0.6"/><rect x="425.0" y="65.0" width="8.0" height="3.2" rx="1.5" fill="#f07412" stroke="#d85a00" stroke-width="0.6"/><rect x="433.0" y="65.0" width="8.0" height="3.2" rx="1.5" fill="#f07412" stroke="#d85a00" stroke-width="0.6"/><rect x="441.0" y="65.0" width="8.0" height="3.2" rx="1.5" fill="#f07412" stroke="#d85a00" stroke-width="0.6"/><rect x="438.5" y="46.5" width="10.5" height="10.5" rx="1.5" fill="#f5891e"/><circle cx="443.75" cy="51.75" r="2.2" fill="none" stroke="#fff" stroke-width="1.1"/><line x1="443.75" y1="48.55" x2="443.75" y2="47.45" stroke="#fff" stroke-width="0.9"/><line x1="443.75" y1="54.95" x2="443.75" y2="56.05" stroke="#fff" stroke-width="0.9"/><line x1="446.95" y1="51.75" x2="448.05" y2="51.75" stroke="#fff" stroke-width="0.9"/><line x1="440.55" y1="51.75" x2="439.45" y2="51.75" stroke="#fff" stroke-width="0.9"/><line x1="445.99" y1="53.99" x2="446.76" y2="54.76" stroke="#fff" stroke-width="0.9"/><line x1="441.51" y1="53.99" x2="440.74" y2="54.76" stroke="#fff" stroke-width="0.9"/><line x1="445.99" y1="49.51" x2="446.76" y2="48.74" stroke="#fff" stroke-width="0.9"/><line x1="441.51" y1="49.51" x2="440.74" y2="48.74" stroke="#fff" stroke-width="0.9"/><rect x="461" y="51" width="21.5" height="7" fill="#7ab87a" stroke="#4c8a4c" stroke-width="1"/><rect x="465" y="58" width="14" height="5" fill="#86c086" stroke="#4c8a4c" stroke-width="1"/><rect x="464.5" y="63" width="15" height="7" fill="#fff4d0" stroke="#8a7a50" stroke-width="1.2"/><rect x="468" y="65.5" width="5" height="1.6" fill="#208020"/><rect x="473" y="46.5" width="10.5" height="10.5" rx="1.5" fill="#f5891e"/><circle cx="478.25" cy="51.75" r="2.2" fill="none" stroke="#fff" stroke-width="1.1"/><line x1="478.25" y1="48.55" x2="478.25" y2="47.45" stroke="#fff" stroke-width="0.9"/><line x1="478.25" y1="54.95" x2="478.25" y2="56.05" stroke="#fff" stroke-width="0.9"/><line x1="481.45" y1="51.75" x2="482.55" y2="51.75" stroke="#fff" stroke-width="0.9"/><line x1="475.05" y1="51.75" x2="473.95" y2="51.75" stroke="#fff" stroke-width="0.9"/><line x1="480.49" y1="53.99" x2="481.26" y2="54.76" stroke="#fff" stroke-width="0.9"/><line x1="476.01" y1="53.99" x2="475.24" y2="54.76" stroke="#fff" stroke-width="0.9"/><line x1="480.49" y1="49.51" x2="481.26" y2="48.74" stroke="#fff" stroke-width="0.9"/><line x1="476.01" y1="49.51" x2="475.24" y2="48.74" stroke="#fff" stroke-width="0.9"/><path d="M496 50.5H513.5Q515 50.5 515 52V62Q515 63.5 513.5 63.5H506L502.8 68.3L502.5 63.5H496Q494.5 63.5 494.5 62V52Q494.5 50.5 496 50.5Z" fill="#def8fc" stroke="#a4a4a4" stroke-width="1.2"/><rect x="507.5" y="46.5" width="10.5" height="10.5" rx="1.5" fill="#f5891e"/><circle cx="512.75" cy="51.75" r="2.2" fill="none" stroke="#fff" stroke-width="1.1"/><line x1="512.75" y1="48.55" x2="512.75" y2="47.45" stroke="#fff" stroke-width="0.9"/><line x1="512.75" y1="54.95" x2="512.75" y2="56.05" stroke="#fff" stroke-width="0.9"/><line x1="515.95" y1="51.75" x2="517.05" y2="51.75" stroke="#fff" stroke-width="0.9"/><line x1="509.55" y1="51.75" x2="508.45" y2="51.75" stroke="#fff" stroke-width="0.9"/><line x1="514.99" y1="53.99" x2="515.76" y2="54.76" stroke="#fff" stroke-width="0.9"/><line x1="510.51" y1="53.99" x2="509.74" y2="54.76" stroke="#fff" stroke-width="0.9"/><line x1="514.99" y1="49.51" x2="515.76" y2="48.74" stroke="#fff" stroke-width="0.9"/><line x1="510.51" y1="49.51" x2="509.74" y2="48.74" stroke="#fff" stroke-width="0.9"/><rect x="545" y="50.8" width="9" height="3.8" fill="#8a8a8a"/><rect x="540.5" y="54.2" width="16.5" height="3.6" fill="#8a8a8a"/><path d="M537.5 57.5H558.5Q557 66 547 67Q539 66 537.5 57.5Z" fill="#b4b4b4" stroke="#888" stroke-width="1"/><rect x="560" y="55.5" width="1.8" height="12" rx="0.9" fill="#555"/><rect x="578.5" y="49.5" width="14.5" height="15.5" fill="#b0b0b0" stroke="#888" stroke-width="1.4"/><rect x="572.5" y="57" width="9.5" height="10" fill="#a8a8a8" stroke="#808080" stroke-width="1.4"/><rect x="587.5" y="62" width="8.5" height="7" fill="#b8b8b8" stroke="#888" stroke-width="1.4"/><path d="M823 50.5L837 65.5M837 50.5L823 65.5" stroke="#f25a3a" stroke-width="2.2" stroke-linecap="round"/><rect x="866.5" y="47.5" width="14" height="19" rx="1.5" fill="#f0e8c8" stroke="#926464" stroke-width="1.2"/><rect x="867.5" y="50" width="12" height="3.5" fill="#1a7070"/><rect x="875" y="50.5" width="4.5" height="2.5" fill="#30d8d8"/><rect x="862" y="61.5" width="8" height="2.6" fill="#dcb430" stroke="#8a6a10" stroke-width="0.6"/><rect x="862" y="64.1" width="8" height="2.6" fill="#dcb430" stroke="#8a6a10" stroke-width="0.6"/><rect x="862" y="66.7" width="8" height="2.6" fill="#dcb430" stroke="#8a6a10" stroke-width="0.6"/><rect x="877.5" y="58.5" width="8" height="2.6" fill="#dcb430" stroke="#8a6a10" stroke-width="0.6"/><rect x="877.5" y="61.1" width="8" height="2.6" fill="#dcb430" stroke="#8a6a10" stroke-width="0.6"/><rect x="877.5" y="63.7" width="8" height="2.6" fill="#dcb430" stroke="#8a6a10" stroke-width="0.6"/><rect x="877.5" y="66.3" width="8" height="2.6" fill="#dcb430" stroke="#8a6a10" stroke-width="0.6"/><path d="M901.5 48.5H910V69H898.5V51.5Z" fill="#fff" stroke="#b0b0b0" stroke-width="1.4"/><rect x="908.5" y="47.5" width="9" height="10" rx="1" fill="#fff" stroke="#b0b0b0" stroke-width="1.2"/><path d="M910.5 50.5H915M910.5 53H915" stroke="#8aa0f0" stroke-width="0.9"/><path d="M902 57.5V65M898.3 61.3H905.8" stroke="#4a9a1a" stroke-width="2.4"/><rect x="905" y="64.5" width="9" height="2.7" fill="#e83a1a"/><path d="M941.7 48.5V58M936.8 53.3H946.6" stroke="#4a9a1a" stroke-width="3.2" stroke-linecap="round"/><rect x="936.5" y="63" width="10.5" height="4.5" rx="2.2" fill="#ec4a1e"/><path d="M980 47.5L987 60M992 47.5L984.5 60" stroke="#a8a8a8" stroke-width="1.6"/><circle cx="980.5" cy="65" r="3" fill="none" stroke="#2ea0a0" stroke-width="1.6"/><circle cx="990.5" cy="65" r="3" fill="none" stroke="#2ea0a0" stroke-width="1.6"/><path d="M982 62.5L985.5 59L989 62.5" fill="none" stroke="#2ea0a0" stroke-width="1.5"/><path d="M1012.5 48.5H1023.0V65.5H1009.5V51.5Z" fill="#e0fcfc" stroke="#90b8b8" stroke-width="1.4" stroke-linejoin="round"/><path d="M1013.0 57.0H1020.0" stroke="#90b8b8" stroke-width="1.1"/><path d="M1013.0 60.0H1020.0" stroke="#90b8b8" stroke-width="1.1"/><path d="M1013.0 63.0H1020.0" stroke="#90b8b8" stroke-width="1.1"/><path d="M1021.5 51.5H1032.0V68.5H1018.5V54.5Z" fill="#e0fcfc" stroke="#90b8b8" stroke-width="1.4" stroke-linejoin="round"/><path d="M1022.0 60.0H1029.0" stroke="#90b8b8" stroke-width="1.1"/><path d="M1022.0 63.0H1029.0" stroke="#90b8b8" stroke-width="1.1"/><path d="M1022.0 66.0H1029.0" stroke="#90b8b8" stroke-width="1.1"/><rect x="1043.5" y="48" width="23" height="19" rx="2" fill="#b4b4b4" stroke="#a0a0a0" stroke-width="1"/><rect x="1050.5" y="46.5" width="9" height="3.5" rx="1.5" fill="#c8c8c8" stroke="#a0a0a0" stroke-width="1"/><path d="M1051.5 53.5H1061.5V69.5H1048.5V56.5Z" fill="#e8e8e8" stroke="#a0a0a0" stroke-width="1.4" stroke-linejoin="round"/><path d="M1052.0 61.5H1058.5" stroke="#a0a0a0" stroke-width="1.1"/><path d="M1052.0 64.5H1058.5" stroke="#a0a0a0" stroke-width="1.1"/><path d="M1052.0 67.5H1058.5" stroke="#a0a0a0" stroke-width="1.1"/><path d="M1267 48.5H1277.5V65.5H1264V51.5Z" fill="#e0fcfc" stroke="#9cc0c0" stroke-width="1.4" stroke-linejoin="round"/><path d="M1276.5 51.5H1287.0V68.5H1273.5V54.5Z" fill="#e0fcfc" stroke="#9cc0c0" stroke-width="1.4" stroke-linejoin="round"/><rect x="1298.5" y="48.5" width="23" height="18.5" rx="2" fill="url(#yel)" stroke="#c09050" stroke-width="1"/><rect x="1305" y="46.5" width="10" height="3.8" rx="1.8" fill="#f0e070" stroke="#c0a030" stroke-width="0.8"/><path d="M1306 53H1317V69.5H1303V56Z" fill="#d8f0f0" stroke="#8aa8ac" stroke-width="1.4" stroke-linejoin="round"/><path d="M1352.5 60.5L1368.5 66L1376 59V62L1368.5 69.5L1352.5 63.5Z" fill="#eef0f4" stroke="#b4bac4" stroke-width="0.9" stroke-linejoin="round"/><defs><linearGradient id="gbk" x1="0" y1="0" x2="1" y2="1"><stop offset="0" stop-color="#2a9a5a"/><stop offset="1" stop-color="#40b070"/></linearGradient></defs><path d="M1352.5 58.5L1359 47.5L1362.5 47L1376 58.5L1368.5 65.5L1352.5 60.5Z" fill="url(#gbk)"/><path d="M1361.5 51.5L1365 53.5" stroke="#c8f0dc" stroke-width="1.6" stroke-linecap="round"/><rect x="1366" y="48" width="10.5" height="10.5" rx="1.5" fill="#f5891e"/><circle cx="1371.25" cy="53.25" r="2.2" fill="none" stroke="#fff" stroke-width="1.1"/><line x1="1371.25" y1="50.05" x2="1371.25" y2="48.95" stroke="#fff" stroke-width="0.9"/><line x1="1371.25" y1="56.45" x2="1371.25" y2="57.55" stroke="#fff" stroke-width="0.9"/><line x1="1374.45" y1="53.25" x2="1375.55" y2="53.25" stroke="#fff" stroke-width="0.9"/><line x1="1368.05" y1="53.25" x2="1366.95" y2="53.25" stroke="#fff" stroke-width="0.9"/><line x1="1373.49" y1="55.49" x2="1374.26" y2="56.26" stroke="#fff" stroke-width="0.9"/><line x1="1369.01" y1="55.49" x2="1368.24" y2="56.26" stroke="#fff" stroke-width="0.9"/><line x1="1373.49" y1="51.01" x2="1374.26" y2="50.24" stroke="#fff" stroke-width="0.9"/><line x1="1369.01" y1="51.01" x2="1368.24" y2="50.24" stroke="#fff" stroke-width="0.9"/><rect x="1387" y="48.5" width="23" height="19.5" fill="#fff" stroke="#6e7ca4" stroke-width="1.1"/><text x="1400.3" y="66" font-family="Liberation Sans" font-weight="bold" font-size="12" fill="#1a1a2a" text-anchor="middle">P</text><rect x="1386.5" y="46.5" width="10.5" height="10.5" rx="1.5" fill="#f5891e"/><circle cx="1391.75" cy="51.75" r="2.2" fill="none" stroke="#fff" stroke-width="1.1"/><line x1="1391.75" y1="48.55" x2="1391.75" y2="47.45" stroke="#fff" stroke-width="0.9"/><line x1="1391.75" y1="54.95" x2="1391.75" y2="56.05" stroke="#fff" stroke-width="0.9"/><line x1="1394.95" y1="51.75" x2="1396.05" y2="51.75" stroke="#fff" stroke-width="0.9"/><line x1="1388.55" y1="51.75" x2="1387.45" y2="51.75" stroke="#fff" stroke-width="0.9"/><line x1="1393.99" y1="53.99" x2="1394.76" y2="54.76" stroke="#fff" stroke-width="0.9"/><line x1="1389.51" y1="53.99" x2="1388.74" y2="54.76" stroke="#fff" stroke-width="0.9"/><line x1="1393.99" y1="49.51" x2="1394.76" y2="48.74" stroke="#fff" stroke-width="0.9"/><line x1="1389.51" y1="49.51" x2="1388.74" y2="48.74" stroke="#fff" stroke-width="0.9"/><rect x="1421.5" y="48.5" width="23" height="19.5" fill="#fff" stroke="#6e7ca4" stroke-width="1.1"/><text x="1433.2" y="66" font-family="Liberation Sans" font-weight="bold" font-size="12" fill="#1a1a2a" text-anchor="middle">ПР</text><rect x="1421" y="46.5" width="10.5" height="10.5" rx="1.5" fill="#f5891e"/><circle cx="1426.25" cy="51.75" r="2.2" fill="none" stroke="#fff" stroke-width="1.1"/><line x1="1426.25" y1="48.55" x2="1426.25" y2="47.45" stroke="#fff" stroke-width="0.9"/><line x1="1426.25" y1="54.95" x2="1426.25" y2="56.05" stroke="#fff" stroke-width="0.9"/><line x1="1429.45" y1="51.75" x2="1430.55" y2="51.75" stroke="#fff" stroke-width="0.9"/><line x1="1423.05" y1="51.75" x2="1421.95" y2="51.75" stroke="#fff" stroke-width="0.9"/><line x1="1428.49" y1="53.99" x2="1429.26" y2="54.76" stroke="#fff" stroke-width="0.9"/><line x1="1424.01" y1="53.99" x2="1423.24" y2="54.76" stroke="#fff" stroke-width="0.9"/><line x1="1428.49" y1="49.51" x2="1429.26" y2="48.74" stroke="#fff" stroke-width="0.9"/><line x1="1424.01" y1="49.51" x2="1423.24" y2="48.74" stroke="#fff" stroke-width="0.9"/><rect x="1465.0" y="48.5" width="11" height="3.5" fill="#eeee10" stroke="#8a8a50" stroke-width="1"/><path d="M1471.0 52V68.5" stroke="#4a5680" stroke-width="1.3"/><path d="M1471.0 56H1474.0" stroke="#4a5680" stroke-width="1.2"/><rect x="1474.0" y="54.5" width="10" height="3.5" rx="0.8" fill="#a9c9ef" stroke="#56668c" stroke-width="1"/><path d="M1471.0 62H1474.0" stroke="#4a5680" stroke-width="1.2"/><rect x="1474.0" y="60.5" width="10" height="3.5" rx="0.8" fill="#a9c9ef" stroke="#56668c" stroke-width="1"/><path d="M1471.0 68H1474.0" stroke="#4a5680" stroke-width="1.2"/><rect x="1474.0" y="66.5" width="10" height="3.5" rx="0.8" fill="#a9c9ef" stroke="#56668c" stroke-width="1"/><path d="M1477.5 57L1486 48" stroke="#e8b020" stroke-width="2.6"/><path d="M1485 49L1487 47" stroke="#ff3030" stroke-width="2.6" stroke-linecap="round"/><path d="M1476.5 58L1478 56.2" stroke="#222" stroke-width="1.8"/><rect x="1499.5" y="48.5" width="11" height="3.5" fill="#eeee10" stroke="#8a8a50" stroke-width="1"/><path d="M1505.5 52V68.5" stroke="#4a5680" stroke-width="1.3"/><path d="M1505.5 56H1508.5" stroke="#4a5680" stroke-width="1.2"/><rect x="1508.5" y="54.5" width="10" height="3.5" rx="0.8" fill="#a9c9ef" stroke="#56668c" stroke-width="1"/><path d="M1505.5 62H1508.5" stroke="#4a5680" stroke-width="1.2"/><rect x="1508.5" y="60.5" width="10" height="3.5" rx="0.8" fill="#a9c9ef" stroke="#56668c" stroke-width="1"/><path d="M1505.5 68H1508.5" stroke="#4a5680" stroke-width="1.2"/><rect x="1508.5" y="66.5" width="10" height="3.5" rx="0.8" fill="#a9c9ef" stroke="#56668c" stroke-width="1"/><path d="M1515.5 50L1522.5 57M1522.5 50L1515.5 57" stroke="#ff2a2a" stroke-width="1.7"/><path d="M1559.5 54.6H1577" stroke="#737487" stroke-width="2"/><path d="M1559.5 59.2H1577" stroke="#737487" stroke-width="2"/><path d="M1559.5 63.7H1577" stroke="#737487" stroke-width="2"/><path d="M1559.5 68.1H1577" stroke="#737487" stroke-width="2"/><path d="M1553 53H1557.5V49L1562.5 54L1557.5 58.8V55.5H1553Z" fill="#0a3ad8"/><path d="M1598 54.6H1611.5" stroke="#737487" stroke-width="2"/><path d="M1594 59.2H1611.5" stroke="#737487" stroke-width="2"/><path d="M1594 63.7H1611.5" stroke="#737487" stroke-width="2"/><path d="M1594 68.1H1611.5" stroke="#737487" stroke-width="2"/><path d="M1590.6 59.8V55H1587.6L1592.2 50.3L1596.8 55H1593.6V59.8Z" fill="#0a3ad8"/><path d="M1628 54.6H1646" stroke="#737487" stroke-width="2"/><path d="M1628 59.2H1646" stroke="#737487" stroke-width="2"/><path d="M1628 63.7H1646" stroke="#737487" stroke-width="2"/><path d="M1628 68.1H1646" stroke="#737487" stroke-width="2"/><path d="M1625.2 60H1628V64.5H1631.2L1626.6 69.2L1622 64.5H1625.2Z" fill="#0a3ad8"/><path d="M1662.5 54.6H1680.5" stroke="#737487" stroke-width="2"/><path d="M1662.5 59.2H1680.5" stroke="#737487" stroke-width="2"/><path d="M1662.5 63.7H1680.5" stroke="#737487" stroke-width="2"/><path d="M1662.5 68.1H1680.5" stroke="#737487" stroke-width="2"/><path d="M1656.5 64.5H1660.5V61.3L1665.5 66L1660.5 70.5V67.5H1656.5Z" fill="#0a3ad8"/><path d="M1725 49A9.5 9.5 0 0 1 1722.5 67.2Q1719 67.5 1716.5 65" fill="none" stroke="#a0b8b8" stroke-width="1.7"/><path d="M1713 67L1717.5 62" stroke="#d08a30" stroke-width="2.6" stroke-linecap="round"/><path d="M1719 54L1732 66.5" stroke="#cc8a3a" stroke-width="2.2"/><path d="M1715.5 56L1721 50.5" stroke="#556868" stroke-width="3.4"/><rect x="1744.8" y="55.5" width="16.5" height="9" fill="url(#blu)"/><path d="M1757.8 55.5L1761.3 53.5V55.5Z" fill="#3a90e8"/><path d="M1760.8 54.5H1765.3L1769.1 59.0V64.5H1760.8Z" fill="#f0a020"/><rect x="1762.8" y="55.8" width="3.2" height="2.6" fill="#d8f8f0"/><rect x="1744.8" y="63.7" width="24.3" height="1.3" fill="#222"/><circle cx="1750.1" cy="64.3" r="2.4" fill="#222"/><circle cx="1765.1" cy="64.3" r="2.4" fill="#222"/><circle cx="1750.1" cy="64.3" r="0.9" fill="#dde070"/><circle cx="1765.1" cy="64.3" r="0.9" fill="#dde070"/><rect x="1744.8" y="67.0" width="24" height="1.3" fill="#9a9a9a" opacity="0.8"/><rect x="1787.5" y="54.5" width="8.0" height="3.2" rx="1.5" fill="#f07412" stroke="#d85a00" stroke-width="0.6"/><rect x="1782.5" y="57.5" width="8.0" height="3.2" rx="1.5" fill="#f07412" stroke="#d85a00" stroke-width="0.6"/><rect x="1790.5" y="57.5" width="8.0" height="3.2" rx="1.5" fill="#f07412" stroke="#d85a00" stroke-width="0.6"/><rect x="1779.5" y="60.5" width="8.0" height="3.2" rx="1.5" fill="#f07412" stroke="#d85a00" stroke-width="0.6"/><rect x="1787.5" y="60.5" width="8.0" height="3.2" rx="1.5" fill="#f07412" stroke="#d85a00" stroke-width="0.6"/><rect x="1795.5" y="60.5" width="8.0" height="3.2" rx="1.5" fill="#f07412" stroke="#d85a00" stroke-width="0.6"/><rect x="1823" y="55.5" width="16.5" height="9" fill="url(#blu)"/><path d="M1836 55.5L1839.5 53.5V55.5Z" fill="#3a90e8"/><path d="M1839 54.5H1843.5L1847.3 59.0V64.5H1839Z" fill="#f0a020"/><rect x="1841" y="55.8" width="3.2" height="2.6" fill="#d8f8f0"/><rect x="1823" y="63.7" width="24.3" height="1.3" fill="#222"/><circle cx="1828.3" cy="64.3" r="2.4" fill="#222"/><circle cx="1843.3" cy="64.3" r="2.4" fill="#222"/><circle cx="1828.3" cy="64.3" r="0.9" fill="#dde070"/><circle cx="1843.3" cy="64.3" r="0.9" fill="#dde070"/><rect x="1823" y="67.0" width="24" height="1.3" fill="#9a9a9a" opacity="0.8"/><path d="M1825 55.5Q1829 51 1834 51.5L1838 52L1840 54.5L1839 55.5Z" fill="#f07412" stroke="#c05000" stroke-width="0.6"/><path d="M1878 60L1887 57L1901 60.5V64L1891 68.5L1878 64Z" fill="#fff" stroke="#e84a4a" stroke-width="1.5" stroke-linejoin="round"/><path d="M1891 64.5L1901 60.5" stroke="#e84a4a" stroke-width="1.6"/><path d="M1881 55L1890 52L1900 54.5V58L1890.5 61.5L1881 58.5Z" fill="#fff" stroke="#e070b0" stroke-width="1" stroke-linejoin="round"/><path d="M1881 55L1890 52L1900 54.5L1890.5 57.8Z" fill="#e868b0"/><path d="M1912.5 60L1921.5 57L1935.5 60.5V64L1925.5 68.5L1912.5 64Z" fill="#fff" stroke="#30a0e0" stroke-width="1.5" stroke-linejoin="round"/><path d="M1925.5 64.5L1935.5 60.5" stroke="#30a0e0" stroke-width="1.6"/><path d="M1915.5 55L1924.5 52L1934.5 54.5V58L1925.0 61.5L1915.5 58.5Z" fill="#fff" stroke="#3050d8" stroke-width="1" stroke-linejoin="round"/><path d="M1915.5 55L1924.5 52L1934.5 54.5L1925.0 57.8Z" fill="#2a44d0"/></svg>
<svg style="position:absolute;left:0;top:240" width="100" height="40" viewBox="0 240 100 40"><path d="M62.5 260L66.5 262L77 267.5L84 252.5L82.5 251.5L77.5 263.5L66.5 260.5L62.5 259Z" fill="#8fb0e8"/><path d="M66.5 259.8L73.8 258L81.6 251.4L83 252.6L77.6 264L66.6 261.6Z" fill="#ffffff"/><path d="M62 258.4L71.1 249.2L77.1 248L85 246L80.5 250.8L73.8 257.5L66.6 258.9L62 259.8Z" fill="#5ee08e"/><path d="M63 259.5V263.5L67 265L76.5 268" fill="none" stroke="#3e8a62" stroke-width="1.6"/><path d="M64 261.8L75.5 265.5" stroke="#9ab8e8" stroke-width="1.2"/><path d="M84 252.5L77 267.5" stroke="#8aa8e0" stroke-width="1.4"/><path d="M62.5 259V263" stroke="#1a4a3a" stroke-width="1.8"/></svg>
</body></html>
